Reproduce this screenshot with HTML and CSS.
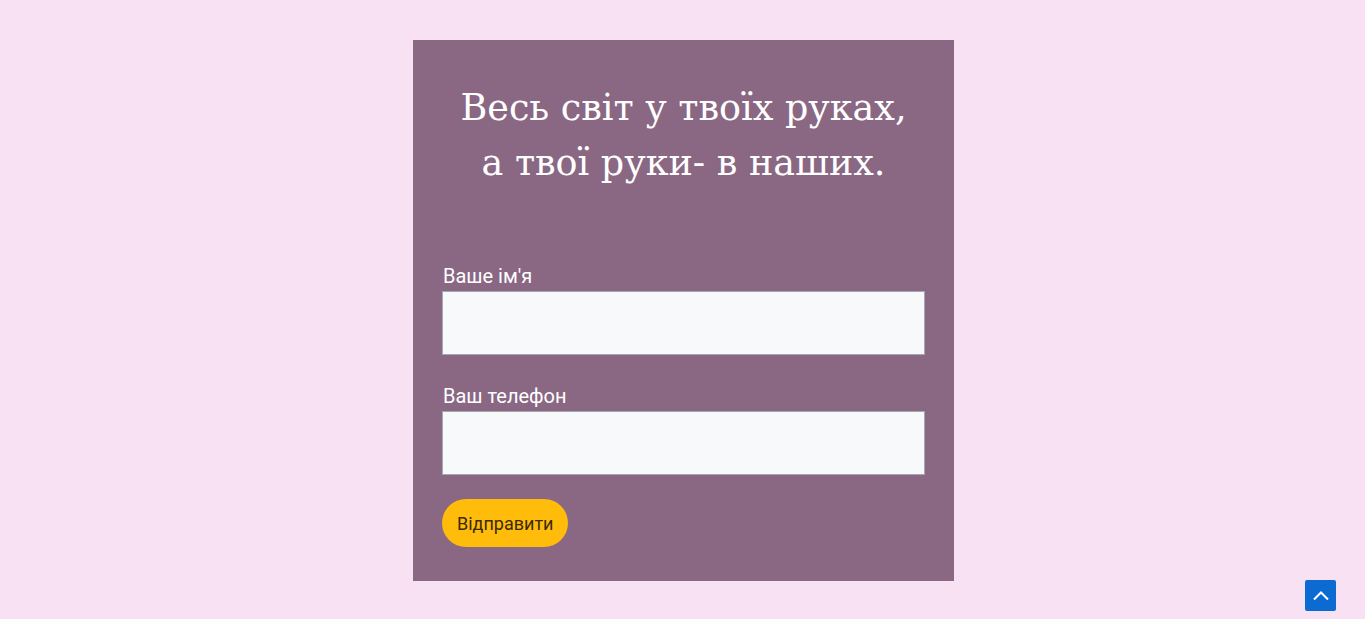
FILE: index.html
```html
<!DOCTYPE html>
<html lang="uk">
<head>
    <meta charset="UTF-8">
    <meta name="viewport" content="width=device-width, initial-scale=1.0">
    <title>Весь світ у твоїх руках</title>
    <link rel="stylesheet" href="styles.css">
</head>
<body>
<main class="page">
    <section class="card">
        <h1 class="card-title">Весь світ у твоїх руках,<br>а твої руки- в наших.</h1>

        <form class="order-form">
            <div class="field">
                <label for="name">Ваше ім'я</label>
                <input type="text" id="name" name="name">
            </div>
            <div class="field">
                <label for="phone">Ваш телефон</label>
                <input type="tel" id="phone" name="phone">
            </div>
            <button type="button" class="submit-btn">Відправити</button>
        </form>
    </section>
</main>

<a href="#" class="to-top" aria-label="Нагору">
    <svg width="16" height="16" viewBox="0 0 16 16">
        <path d="M1 11.5 L8 4.5 L15 11.5" fill="none" stroke="#fff" stroke-width="2"/>
    </svg>
</a>
</body>
</html>
```

FILE: styles.css
```css
:root {
    --page-bg: #f9e1f4;
    --card-bg: #8a6884;
    --input-bg: #f8f9fb;
    --input-border: #a3a8b1;
    --accent: #ffbc0a;
    --link-blue: #0b6bd3;
}

html, body {
    margin: 0;
    padding: 0;
}

body {
    background-color: var(--page-bg);
    font-family: Roboto, "Noto Sans", sans-serif;
    min-height: 619px;
}

.page {
    padding: 40px 0 0 2px;
}

.card {
    width: 541px;
    height: 541px;
    box-sizing: border-box;
    margin: 0 auto;
    padding: 40px 29px 0;
    background-color: var(--card-bg);
}

.card-title {
    margin: 0;
    color: #fff;
    font-family: "Roboto Slab", "DejaVu Serif", serif;
    font-weight: 400;
    font-size: 36.5px;
    line-height: 55px;
    text-align: center;
}

.order-form {
    margin-top: 74px;
    display: flex;
    flex-direction: column;
    align-items: flex-start;
}

.field {
    width: 100%;
    margin-bottom: 29px;
}

.field label {
    display: block;
    color: #fff;
    font-size: 20px;
    line-height: 24px;
    margin-bottom: 3px;
    padding-left: 1px;
}

.field input {
    display: block;
    width: 100%;
    height: 64px;
    box-sizing: border-box;
    margin: 0;
    border: 1px solid var(--input-border);
    background-color: var(--input-bg);
    font-size: 16px;
    padding: 0 12px;
}

.field:last-of-type {
    margin-bottom: 24px;
}

.submit-btn {
    height: 48px;
    padding: 0 15px;
    border: none;
    border-radius: 24px;
    background-color: var(--accent);
    color: #3a2a06;
    font-family: Roboto, sans-serif;
    font-size: 18px;
    cursor: pointer;
}

.to-top {
    position: fixed;
    right: 29px;
    bottom: 8px;
    width: 31px;
    height: 31px;
    border-radius: 2px;
    background-color: var(--link-blue);
    display: flex;
    align-items: center;
    justify-content: center;
}
```
